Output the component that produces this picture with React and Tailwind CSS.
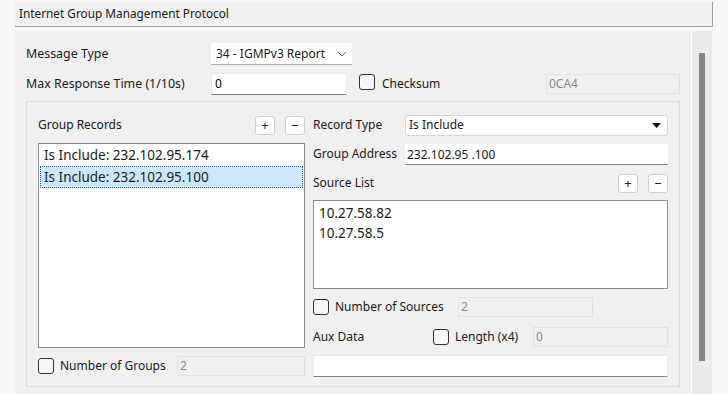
import React from 'react'

const font = { fontFamily: '"Noto Sans", "Open Sans", sans-serif' }

function Checkbox() {
  return <span className="inline-block w-[16px] h-[16px] rounded-[3px] border border-[#333] bg-[#f7f7f7] shrink-0" />
}

function SmallButton({ children }) {
  return (
    <span className="flex items-center justify-center w-[20px] h-[19px] rounded-[3px] border border-[#d0d0d0] bg-[#fdfdfd] text-[13px] leading-none text-[#222]">
      {children}
    </span>
  )
}

function DisabledField({ value, className }) {
  return (
    <div className={`h-[20px] border border-[#e3e3e3] bg-[#f0f0f0] pl-[2px] text-[12px] leading-[18px] text-[#8a8a8a] ${className}`}>
      {value}
    </div>
  )
}

function TextField({ value, className }) {
  return (
    <div className={`h-[22px] bg-white border border-[#e8e8e8] border-b-[#868686] pl-[3px] text-[12px] leading-[20px] text-black ${className}`}>
      {value}
    </div>
  )
}

export default function App() {
  return (
    <div className="w-[728px] h-[394px] flex bg-[#f7f7f7] overflow-hidden text-[#1a1a1a]" style={font}>
      <div className="w-[15px] shrink-0" />
      <div className="w-[698px] shrink-0 flex flex-col">
        {/* header */}
        <div className="h-[25px] mt-[2px] shrink-0 bg-[#f0f0f0] border-b border-r border-[#a0a0a0] pl-[4px] text-[11.8px] leading-[22px]">
          Internet Group Management Protocol
        </div>
        <div className="h-[4px]" />
        <div className="flex flex-1">
          {/* content */}
          <div className="w-[677px] bg-[#f0f0f0] border-r border-white pt-[12px] pl-[11px] pr-[11px]">
            <div className="flex items-center h-[22px]">
              <span className="w-[185px] text-[12.4px]">Message Type</span>
              <div className="w-[141px] h-[22px] bg-white border-b border-[#b0b0b0] flex items-center pl-[5px] pr-[5px] text-[12px]">
                <span className="flex-1">34 - IGMPv3 Report</span>
                <svg width="10" height="6" viewBox="0 0 10 6" className="shrink-0">
                  <path d="M1 1 L5 5 L9 1" fill="none" stroke="#666" strokeWidth="1" />
                </svg>
              </div>
            </div>
            <div className="flex items-center h-[22px] mt-[8px]">
              <span className="w-[185px] text-[12.4px]">Max Response Time (1/10s)</span>
              <TextField value="0" className="w-[136px]" />
              <span className="ml-[12px]"><Checkbox /></span>
              <span className="ml-[7px] w-[164px] text-[12px]">Checksum</span>
              <DisabledField value="0CA4" className="w-[134px]" />
            </div>
            {/* group box */}
            <div className="mt-[6px] h-[286px] border border-[#dcdcdc] flex pl-[11px] pt-[13px] pr-[11px]">
              <div className="w-[268px] flex flex-col">
                <div className="flex items-center h-[20px]">
                  <span className="flex-1 text-[12px]">Group Records</span>
                  <SmallButton>+</SmallButton>
                  <span className="w-[10px]" />
                  <SmallButton>−</SmallButton>
                </div>
                <div className="mt-[8px] h-[205px] bg-white border border-[#8c8c8c] px-[1px] text-[13.5px]">
                  <div className="h-[22px] leading-[22px] pl-[4px]">Is Include: 232.102.95.174</div>
                  <div className="h-[22px] leading-[20px] pl-[3px] bg-[#cce8ff] border border-dotted border-[#2b5a8a]">Is Include: 232.102.95.100</div>
                </div>
                <div className="flex items-center mt-[8px] h-[20px]">
                  <Checkbox />
                  <span className="ml-[6px] w-[117px] text-[12px]">Number of Groups</span>
                  <DisabledField value="2" className="w-[128px]" />
                </div>
              </div>
              <div className="w-[356px] ml-[8px] flex flex-col">
                <div className="flex items-center h-[20px]">
                  <span className="w-[92px] text-[12px]">Record Type</span>
                  <div className="flex-1 h-[21px] bg-white border border-[#d8d8d8] rounded-[3px] flex items-center pl-[3px] pr-[6px] text-[12px]">
                    <span className="flex-1">Is Include</span>
                    <svg width="9" height="5" viewBox="0 0 9 5">
                      <path d="M0 0 L9 0 L4.5 5 Z" fill="#111" />
                    </svg>
                  </div>
                </div>
                <div className="flex items-center mt-[9px] h-[20px]">
                  <span className="w-[92px] text-[12px]">Group Address</span>
                  <div className="flex-1 h-[21px] bg-white border-b border-[#8a8a8a] pl-[2px] text-[12px] leading-[21px]">232.102.95 .100</div>
                </div>
                <div className="flex items-center mt-[9px] h-[20px]">
                  <span className="flex-1 text-[12px]">Source List</span>
                  <SmallButton>+</SmallButton>
                  <span className="w-[10px]" />
                  <SmallButton>−</SmallButton>
                </div>
                <div className="mt-[7px] h-[89px] bg-white border border-[#8c8c8c] pt-[2px] pl-[5px] text-[13.5px] leading-[20px]">
                  <div>10.27.58.82</div>
                  <div>10.27.58.5</div>
                </div>
                <div className="flex items-center mt-[8px] h-[20px]">
                  <Checkbox />
                  <span className="ml-[6px] w-[123px] text-[12px]">Number of Sources</span>
                  <DisabledField value="2" className="w-[135px]" />
                </div>
                <div className="flex items-center mt-[10px] h-[20px]">
                  <span className="w-[120px] text-[12px]">Aux Data</span>
                  <Checkbox />
                  <span className="ml-[6px] w-[78px] text-[12px]">Length (x4)</span>
                  <DisabledField value="0" className="w-[135px]" />
                </div>
                <div className="mt-[8px] h-[22px] w-[355px] bg-white border border-[#e8e8e8] border-b-[#868686]" />
              </div>
            </div>
          </div>
          {/* scrollbar */}
          <div className="w-[20px] bg-[#ebebeb] flex justify-center pt-[22px]">
            <div className="w-[6px] h-[308px] bg-[#858585]" />
          </div>
          <div className="w-px bg-[#f7f7f7]" />
        </div>
      </div>
    </div>
  )
}
